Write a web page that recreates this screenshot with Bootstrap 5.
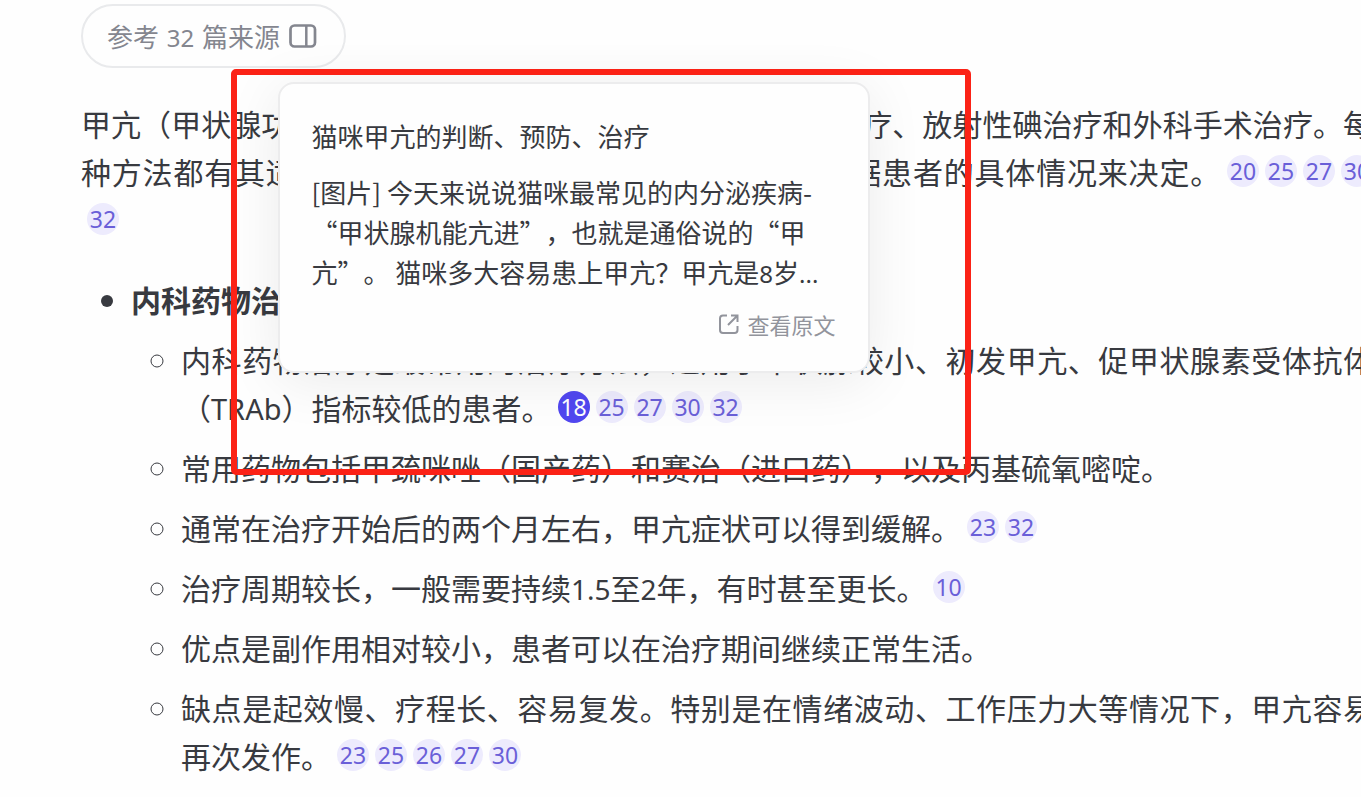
<!DOCTYPE html>
<html lang="zh-CN">
<head>
<meta charset="utf-8">
<meta name="viewport" content="width=device-width, initial-scale=1">
<title>甲亢的治疗方法</title>
<link href="https://cdn.jsdelivr.net/npm/bootstrap@5.3.0/dist/css/bootstrap.min.css" rel="stylesheet">
<style>
  body {
    font-family: "Noto Sans CJK SC", sans-serif;
    font-size: 30px;
    line-height: 48px;
    color: #383a40;
    background: #fefefe;
    text-spacing-trim: space-all;
    overflow-x: hidden;
  }
  /* the answer column runs past the right edge of the window */
  .answer {
    padding: 4px 0 16px 81px;
    margin-right: -12px;
    text-align: justify;
  }
  .latin { font-family: "Noto Sans", sans-serif; font-size: 28px; line-height: 1; }
  .latin-caps { font-family: "Noto Sans", sans-serif; font-size: 29px; line-height: 1; }
  .small-latin { font-family: "Noto Sans", sans-serif; font-size: 24px; line-height: 1; }

  .sources {
    height: 64px;
    padding: 0 26px 0 24px;
    border: 2px solid #e9eaec;
    border-radius: 32px;
    background: #fefefe;
    color: #84868f;
    font-size: 26px;
    line-height: 40px;
  }
  .sources .small-latin { margin: 0 2px; }
  .intro { margin: 31px 0 32px; }
  .points, .points ul { margin: 0; padding-left: 50px; }
  .points ul { list-style: circle; }
  .points ul > li { margin-top: 12px; }

  .cite {
    width: 32px;
    height: 32px;
    margin-left: 6px;
    padding: 0;
    border: 0;
    border-radius: 50%;
    background: #edebfd;
    color: #6a5fd8;
    font: 23px/32px "Noto Sans", sans-serif;
    text-align: center;
    vertical-align: 4px;
  }
  .cite.active { background: #5147f0; color: #fff; }
  .cite-wrap { margin-left: 6px; vertical-align: 4px; }
  .cite-wrap .cite { margin: 0; }

  .source-pop {
    bottom: calc(100% + 18px);
    left: 50%;
    transform: translateX(-50%);
    width: 592px;
    padding: 32px 32px 31px;
    border: 2px solid #ececed;
    border-radius: 16px;
    background: #fefefe;
    box-shadow: 0 8px 56px rgba(0, 0, 0, .08);
    font-size: 26px;
    line-height: 40px;
    text-align: left;
    z-index: 10;
  }
  .source-pop h2 { margin: 0 0 16px; font-size: 26px; line-height: 40px; font-weight: 400; color: inherit; }
  .origin { color: #92949c; font-size: 22px; line-height: 32px; gap: 8px; }

  .marker-frame {
    left: 231px;
    top: 69px;
    width: 740px;
    height: 406px;
    border: 6px solid #fb2216;
    border-radius: 5px;
    pointer-events: none;
    z-index: 20;
  }
</style>
</head>
<body>
<main class="answer position-relative">
  <button type="button" class="sources d-flex align-items-center gap-2">
    <span>参考 <span class="small-latin">32</span> 篇来源</span>
    <svg width="30" height="26" viewBox="0 0 30 26" fill="none" stroke="currentColor" stroke-width="2.700" aria-hidden="true"><rect x="2.500" y="2.500" width="24.500" height="21" rx="4"/><path d="M18.300 2.500v21" stroke-width="2.500"/></svg>
  </button>

  <p class="intro">甲亢（甲状腺功能亢进症）的治疗方法主要包括内科药物治疗、放射性碘治疗和外科手术治疗。每种方法都有其适应症和优缺点，选择治疗方法时通常需根据患者的具体情况来决定。<button type="button" class="cite">20</button><button type="button" class="cite">25</button><button type="button" class="cite">27</button><button type="button" class="cite">30</button><button type="button" class="cite">32</button></p>

  <ul class="points">
    <li><strong>内科药物治疗</strong>
      <ul>
        <li>内科药物治疗是最常用的治疗方法，适用于甲状腺较小、初发甲亢、促甲状腺素受体抗体（<span class="latin-caps">TRAb</span>）指标较低的患者。<div class="cite-wrap d-inline-flex align-items-baseline position-relative"><button type="button" class="cite active">18</button>
          <section class="source-pop position-absolute" aria-label="来源">
            <h2>猫咪甲亢的判断、预防、治疗</h2>
            <p class="m-0">[图片] 今天来说说猫咪最常见的内分泌疾病-“甲状腺机能亢进”，也就是通俗说的“甲亢”。 猫咪多大容易患上甲亢？甲亢是<span class="small-latin">8</span>岁<span class="small-latin">...</span></p>
            <div class="d-flex justify-content-end mt-3">
              <a href="#" class="origin d-flex align-items-center text-decoration-none">
                <svg width="22" height="22" viewBox="0 0 22 22" fill="none" stroke="currentColor" stroke-width="2" aria-hidden="true"><path d="M9 2.500H5A3 3 0 0 0 2 5.500V17a3 3 0 0 0 3 3h11.500a3 3 0 0 0 3-3v-4M13 2.500h6.500V9M19.500 2.500 10 12"/></svg>
                <span>查看原文</span>
              </a>
            </div>
          </section></div><button type="button" class="cite">25</button><button type="button" class="cite">27</button><button type="button" class="cite">30</button><button type="button" class="cite">32</button></li>
        <li>常用药物包括甲巯咪唑（国产药）和赛治（进口药），以及丙基硫氧嘧啶。</li>
        <li>通常在治疗开始后的两个月左右，甲亢症状可以得到缓解。<button type="button" class="cite">23</button><button type="button" class="cite">32</button></li>
        <li>治疗周期较长，一般需要持续<span class="latin">1.5</span>至<span class="latin">2</span>年，有时甚至更长。<button type="button" class="cite">10</button></li>
        <li>优点是副作用相对较小，患者可以在治疗期间继续正常生活。</li>
        <li>缺点是起效慢、疗程长、容易复发。特别是在情绪波动、工作压力大等情况下，甲亢容易再次发作。<button type="button" class="cite">23</button><button type="button" class="cite">25</button><button type="button" class="cite">26</button><button type="button" class="cite">27</button><button type="button" class="cite">30</button></li>
      </ul>
    </li>
  </ul>

  <div class="marker-frame position-absolute" aria-hidden="true"></div>
</main>
<script src="https://cdn.jsdelivr.net/npm/bootstrap@5.3.0/dist/js/bootstrap.bundle.min.js"></script>
</body>
</html>
